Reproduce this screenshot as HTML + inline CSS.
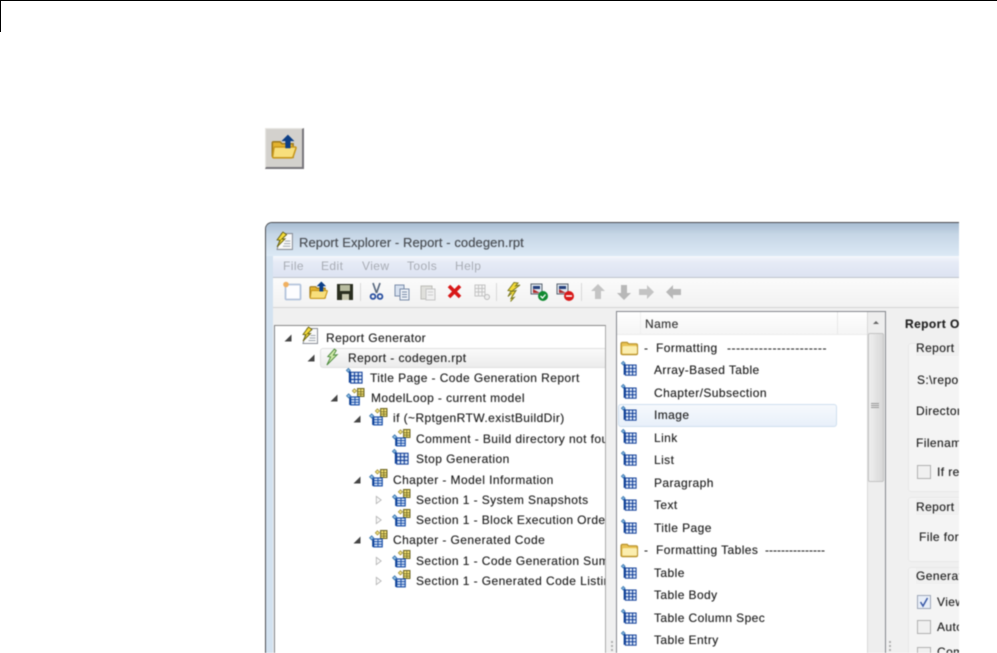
<!DOCTYPE html>
<html><head><meta charset="utf-8"><style>
html,body{margin:0;padding:0;background:#fff;width:997px;height:653px;overflow:hidden}
.a{position:absolute}
.t{position:absolute;font:12px/16px "Liberation Sans",sans-serif;letter-spacing:.42px;color:#1e1e1e;white-space:nowrap;transform:translateY(-8px);text-shadow:0 0 .6px rgba(30,30,30,.55)}
svg.i{position:absolute;overflow:visible}
#w{position:absolute;left:0;top:0;width:997px;height:653px;overflow:hidden;filter:blur(.5px)}
</style></head><body>
<svg width="0" height="0" style="position:absolute"><defs>
<symbol id="grid" viewBox="0 0 18 18" overflow="visible">
<path d="M2.500 0.300l2.200 2.200-2.200 2.200-2.200-2.200z" fill="#7fb0dc" stroke="#2f6ea8" stroke-width=".7"/>
<rect x="3" y="3.500" width="2.200" height="12" fill="#0c3f96"/>
<rect x="5" y="4.500" width="12" height="11.500" fill="#dce8f8" stroke="#123f98" stroke-width="1.100"/>
<path d="M9 4.500v11.500M13 4.500v11.500M5 8.300h12M5 12.100h12" stroke="#123f98" stroke-width="1.200"/>
</symbol>
<symbol id="loop" viewBox="0 0 18 18" overflow="visible">
<path d="M2.500 5.500l2 2-2 2-2-2z" fill="#8fbce4" stroke="#2f6ea8" stroke-width=".7"/>
<path d="M8 .7l2 2-2 2-2-2z" fill="#f0df80" stroke="#9a8a30" stroke-width=".7"/>
<rect x="11" y="0.500" width="6" height="7.500" fill="#f3e173" stroke="#6b6420" stroke-width="1"/>
<path d="M14 1v7M11 3.500h6M11 5.800h6" stroke="#6b6420" stroke-width=".7"/>
<rect x="4.500" y="8.500" width="8" height="7.500" fill="#d8e6f8" stroke="#1a4fa8" stroke-width="1.100"/>
<path d="M8.500 8v8M4 11h9M4 13.500h9" stroke="#1a4fa8" stroke-width=".9"/>
<rect x="3" y="9" width="1.600" height="7" fill="#0c3f96"/>
</symbol>
<symbol id="folder" viewBox="0 0 20 16" overflow="visible">
<path d="M1 13V3q0-1.500 1.500-1.500h5l1.500 1.500h8q1.500 0 1.500 1.500V13q0 1.500-1.500 1.500H2.500Q1 14.500 1 13z" fill="#e9c253" stroke="#b8922c" stroke-width="1.300"/>
<path d="M2.500 7q0-1.500 1.500-1.500h12.500q1.500 0 1.500 1.500v5.500q0 1-1 1H3.500q-1 0-1-1z" fill="#fbeeb0"/>
</symbol>
<symbol id="open" viewBox="0 0 20 20" overflow="visible">
<path d="M1 17V7q0-1 1-1h5l1.500 1.500H17V18H2z" fill="#e4b32e" stroke="#a07c20" stroke-width="1.200"/>
<path d="M3 10h15.500q1 0 .7 1L17 17.500q-.3.800-1.300.8H2q-1 0-.7-1L2.200 11q.2-1 .8-1z" fill="#f8df7c" stroke="#c8981c" stroke-width="1.200"/>
<path d="M13 .5l5 5h-3V11h-4V5.500H8z" fill="#0d3f86"/>
</symbol>
<symbol id="bolt" viewBox="0 0 16 20" overflow="visible">
<path d="M8 1L2 9l3 .5L2 15l5-4.500L5.500 10 14 3.500 9.500 4.500 12 1.500z" fill="#f5dc3a" stroke="#7d7a20" stroke-width="1"/>
<path d="M6 10l4-1-5 8 3-1-3.500 4" fill="#f5dc3a" stroke="#7d7a20" stroke-width="1"/>
</symbol>
<symbol id="rpt" viewBox="0 0 18 18" overflow="visible">
<path d="M6 1.500h10.500V16.500H2L6 1.500z" fill="#fafafa" stroke="#8a8f98" stroke-width="1"/>
<path d="M9.500 8.500h5M8.500 11h6M7.500 13.500h7" stroke="#a0a8b0" stroke-width="1"/>
<path d="M7.500 0L2 7.500l3 .3L2 14l7.500-7.500-3 .2L11 2.500z" fill="#f5dc3a" stroke="#6b6410" stroke-width=".9"/>
</symbol>
<symbol id="arrowD" viewBox="0 0 8 8" overflow="visible"><path d="M7.500 .5v7H.5z" fill="#444"/></symbol>
<symbol id="arrowR" viewBox="0 0 8 10" overflow="visible"><path d="M1.500 .8L7 5 1.500 9.200z" fill="#fafafa" stroke="#b4b4b4"/></symbol>
<symbol id="chk" viewBox="0 0 18 18" overflow="visible">
<rect x="1" y="1" width="11" height="10" fill="#dfe6ee" stroke="#5a6470"/>
<path d="M3 3h7v3H3z" fill="#24407c"/><path d="M3 6l7 4H3z" fill="#b03030"/>
</symbol>
</defs></svg>
<div class="a" style="left:0;top:0;width:997px;height:1px;background:#000"></div>
<div class="a" style="left:0;top:0;width:1px;height:32px;background:#000"></div>
<div id="w">
<!-- standalone button -->
<div class="a" style="left:265px;top:128px;width:39px;height:41px;box-sizing:border-box;background:#d3d1cd;border-right:2px solid #77757a;border-bottom:2px solid #77757a;border-top:1px solid #e8e6e2;border-left:1px solid #e8e6e2"></div>
<svg class="i" style="left:271px;top:134px" width="26" height="26"><use href="#open" width="26" height="26"/></svg>
<!-- window -->
<div class="a" style="left:265px;top:222px;width:694px;height:440px;box-sizing:border-box;border:1px solid #4a4c50;border-right:0;border-radius:7px 0 0 0;background:#d3e2f0;overflow:hidden">
 <div class="a" style="left:0;top:0;width:700px;height:33px;background:linear-gradient(#a8bdd2,#c6d6e6 35%,#dce9f5)"></div>
 <div class="a" style="left:7px;top:33px;width:700px;height:21px;background:linear-gradient(#f5f8fc,#e6ebf6 30%,#dde3f2);border-bottom:1px solid #bfc4cc"></div>
 <div class="a" style="left:7px;top:55px;width:700px;height:29px;background:linear-gradient(#fbfbfb,#f2f2f2);border-bottom:1px solid #d4d4d4"></div>
 <div class="a" style="left:7px;top:85px;width:700px;height:360px;background:#f0f0f0"></div>
</div>
<svg class="i" style="left:275px;top:232px" width="19" height="19"><use href="#rpt" width="19" height="19"/></svg>
<div class="t" style="left:299px;top:243px;color:#4a4e54;font-size:13px;letter-spacing:.08px">Report Explorer - Report - codegen.rpt</div>
<div class="t" style="left:283px;top:266px;color:#a8acb4;text-shadow:none">File</div>
<div class="t" style="left:321px;top:266px;color:#a8acb4;text-shadow:none">Edit</div>
<div class="t" style="left:362px;top:266px;color:#a8acb4;text-shadow:none">View</div>
<div class="t" style="left:407px;top:266px;color:#a8acb4;text-shadow:none">Tools</div>
<div class="t" style="left:455px;top:266px;color:#a8acb4;text-shadow:none">Help</div>
<!-- toolbar -->
<svg class="i" style="left:280px;top:280px" width="400" height="24" viewBox="0 0 400 24">
 <rect x="5.500" y="4.500" width="15" height="15" rx="1" fill="#fdfdff" stroke="#b4c4dc" stroke-width="1.800"/><circle cx="6" cy="4.500" r="2.800" fill="#f0b060"/>
 <use href="#open" x="29" y="1" width="19" height="19"/>
 <rect x="57" y="4" width="16" height="16" fill="#2a2e20"/><rect x="60" y="5" width="10" height="6" fill="#b8bca0"/><rect x="62" y="14" width="7" height="6" fill="#c8c8b0"/>
 <path d="M80.500 3v18" stroke="#d8d8d8"/>
 <path d="M93 3l3.500 10M100 3l-3.500 10" stroke="#5a6a80" stroke-width="1.700"/><circle cx="93" cy="16.500" r="2.400" fill="none" stroke="#2a50a0" stroke-width="1.800"/><circle cx="100" cy="16.500" r="2.400" fill="none" stroke="#2a50a0" stroke-width="1.800"/>
 <rect x="115" y="5" width="9" height="11" fill="#d8e2f0" stroke="#7a8ca8"/><rect x="120" y="9" width="9" height="11" fill="#eef2f8" stroke="#7a8ca8"/><path d="M122 12h5M122 14.500h5M122 17h5" stroke="#7a8ca8"/>
 <rect x="141" y="6" width="11" height="13" fill="#e0e0dc" stroke="#bdbdb8"/><rect x="146" y="9" width="9" height="11" fill="#f0f0f0" stroke="#c4c4c4"/><path d="M148 12h5M148 15h5" stroke="#ccc"/>
 <path d="M169 6l11 11M180 6l-11 11" stroke="#d81818" stroke-width="3.600"/>
 <rect x="195" y="5" width="10" height="11" fill="#f4f4f4" stroke="#c4c4c4"/><path d="M198.500 5v11M202 5v11M195 8.500h10M195 12h10" stroke="#c4c4c4"/><circle cx="207" cy="17" r="2.500" fill="#eee" stroke="#bbb"/>
 <path d="M216.500 3v18" stroke="#d8d8d8"/>
 <use href="#bolt" x="226" y="1" width="16" height="21"/>
 <use href="#chk" x="250" y="3" width="18" height="18"/><circle cx="263" cy="16" r="5" fill="#108a30"/><path d="M260.500 16l2 2 3-3.500" stroke="#fff" stroke-width="1.300" fill="none"/>
 <use href="#chk" x="276" y="3" width="18" height="18"/><circle cx="289" cy="16" r="5" fill="#d81818"/><path d="M286 16h6" stroke="#fff" stroke-width="1.600"/>
 <path d="M301.500 3v18" stroke="#d8d8d8"/>
 <path d="M318 4l7 7h-4v8h-6v-8h-4z" fill="#c4c4c4"/>
 <path d="M344 20l-7-7h4V5h6v8h4z" fill="#b8b8b8"/>
 <path d="M374 12l-7 7v-4h-8V9h8V5z" fill="#c4c4c4"/>
 <path d="M386 12l7-7v4h8v6h-8v4z" fill="#b8b8b8"/>
</svg>
<!-- tree panel -->
<div class="a" style="left:274px;top:325px;width:332px;height:340px;box-sizing:border-box;background:#fff;border:1px solid #7f8288;border-right-color:#aaa;border-top-color:#8a8a8a"></div>
<div class="a" style="left:320px;top:348px;width:285px;height:20px;background:linear-gradient(#fafafa,#ececec);border:1px solid #e0e0e0;border-right:0;border-radius:3px 0 0 3px;box-sizing:border-box"></div>
<svg class="i" style="left:284px;top:334px" width="8" height="8"><use href="#arrowD" width="8" height="8"/></svg>
<svg class="i" style="left:307px;top:354px" width="8" height="8"><use href="#arrowD" width="8" height="8"/></svg>
<svg class="i" style="left:330px;top:394px" width="8" height="8"><use href="#arrowD" width="8" height="8"/></svg>
<svg class="i" style="left:353px;top:415px" width="8" height="8"><use href="#arrowD" width="8" height="8"/></svg>
<svg class="i" style="left:353px;top:476px" width="8" height="8"><use href="#arrowD" width="8" height="8"/></svg>
<svg class="i" style="left:353px;top:536px" width="8" height="8"><use href="#arrowD" width="8" height="8"/></svg>
<svg class="i" style="left:375px;top:495px" width="7" height="10"><use href="#arrowR" width="7" height="10"/></svg>
<svg class="i" style="left:375px;top:515px" width="7" height="10"><use href="#arrowR" width="7" height="10"/></svg>
<svg class="i" style="left:375px;top:556px" width="7" height="10"><use href="#arrowR" width="7" height="10"/></svg>
<svg class="i" style="left:375px;top:576px" width="7" height="10"><use href="#arrowR" width="7" height="10"/></svg>
<svg class="i" style="left:301px;top:327px" width="18" height="18"><use href="#rpt" width="18" height="18"/></svg>
<svg class="i" style="left:325px;top:348px" width="15" height="19" viewBox="0 0 16 20"><path d="M10 1L3 9l3 .5L2 18l11-11-4 .5 3-5z" fill="#cfe8a8" stroke="#4c8a3c" stroke-width="1"/></svg>
<svg class="i" style="left:346px;top:368px" width="17" height="17"><use href="#grid" width="17" height="17"/></svg>
<svg class="i" style="left:346px;top:388px" width="19" height="19"><use href="#loop" width="19" height="19"/></svg>
<svg class="i" style="left:369px;top:408px" width="19" height="19"><use href="#loop" width="19" height="19"/></svg>
<svg class="i" style="left:392px;top:429px" width="19" height="19"><use href="#loop" width="19" height="19"/></svg>
<svg class="i" style="left:392px;top:449px" width="17" height="17"><use href="#grid" width="17" height="17"/></svg>
<svg class="i" style="left:369px;top:469px" width="19" height="19"><use href="#loop" width="19" height="19"/></svg>
<svg class="i" style="left:392px;top:489px" width="19" height="19"><use href="#loop" width="19" height="19"/></svg>
<svg class="i" style="left:392px;top:509px" width="19" height="19"><use href="#loop" width="19" height="19"/></svg>
<svg class="i" style="left:369px;top:530px" width="19" height="19"><use href="#loop" width="19" height="19"/></svg>
<svg class="i" style="left:392px;top:550px" width="19" height="19"><use href="#loop" width="19" height="19"/></svg>
<svg class="i" style="left:392px;top:570px" width="19" height="19"><use href="#loop" width="19" height="19"/></svg>
<div class="a" style="left:275px;top:326px;width:330px;height:300px;overflow:hidden">
<div class="t" style="left:51px;top:12px">Report Generator</div>
<div class="t" style="left:73px;top:32px">Report - codegen.rpt</div>
<div class="t" style="left:95px;top:52px">Title Page - Code Generation Report</div>
<div class="t" style="left:96px;top:72px">ModelLoop - current model</div>
<div class="t" style="left:118px;top:92px">if (~RptgenRTW.existBuildDir)</div>
<div class="t" style="left:141px;top:113px">Comment - Build directory not found</div>
<div class="t" style="left:141px;top:133px">Stop Generation</div>
<div class="t" style="left:118px;top:154px">Chapter - Model Information</div>
<div class="t" style="left:141px;top:174px">Section 1 - System Snapshots</div>
<div class="t" style="left:141px;top:194px">Section 1 - Block Execution Order</div>
<div class="t" style="left:118px;top:214px">Chapter - Generated Code</div>
<div class="t" style="left:141px;top:235px">Section 1 - Code Generation Summary</div>
<div class="t" style="left:141px;top:255px">Section 1 - Generated Code Listing</div>
</div>
<!-- list panel -->
<div class="a" style="left:616px;top:311px;width:270px;height:350px;box-sizing:border-box;background:#fff;border:1px solid #83868c"></div>
<div class="a" style="left:617px;top:312px;width:250px;height:22px;background:linear-gradient(#fff,#f5f5f5);border-bottom:1px solid #ececec"></div>
<div class="a" style="left:640px;top:312px;width:1px;height:22px;background:#f0f0f0"></div>
<div class="a" style="left:837px;top:312px;width:1px;height:22px;background:#e8e8e8"></div>
<div class="t" style="left:645px;top:324px;color:#333">Name</div>
<div class="a" style="left:867px;top:312px;width:18px;height:345px;background:#eeeeee;border-left:1px solid #d8d8d8;box-sizing:border-box"></div>
<svg class="i" style="left:872px;top:319px" width="8" height="5"><path d="M1 5l3-3 3 3z" fill="#666"/></svg>
<div class="a" style="left:868px;top:333px;width:16px;height:149px;box-sizing:border-box;background:linear-gradient(90deg,#efefef,#d8d8d8);border:1px solid #c4c4c4;border-radius:2px"></div>
<div class="a" style="left:871px;top:403px;width:8px;height:1px;background:#999;box-shadow:0 2px #999,0 4px #999"></div>
<div class="a" style="left:618px;top:404px;width:219px;height:23px;box-sizing:border-box;background:linear-gradient(#f6f9fd,#e8f0fa);border:1px solid #cfdfef;border-radius:3px"></div>
<svg class="i" style="left:620px;top:341px" width="19" height="15"><use href="#folder" width="19" height="15"/></svg>
<svg class="i" style="left:620px;top:543px" width="19" height="15"><use href="#folder" width="19" height="15"/></svg>
<svg class="i" style="left:621px;top:361px" width="16" height="16"><use href="#grid" width="16" height="16"/></svg>
<svg class="i" style="left:621px;top:384px" width="16" height="16"><use href="#grid" width="16" height="16"/></svg>
<svg class="i" style="left:621px;top:406px" width="16" height="16"><use href="#grid" width="16" height="16"/></svg>
<svg class="i" style="left:621px;top:429px" width="16" height="16"><use href="#grid" width="16" height="16"/></svg>
<svg class="i" style="left:621px;top:451px" width="16" height="16"><use href="#grid" width="16" height="16"/></svg>
<svg class="i" style="left:621px;top:474px" width="16" height="16"><use href="#grid" width="16" height="16"/></svg>
<svg class="i" style="left:621px;top:496px" width="16" height="16"><use href="#grid" width="16" height="16"/></svg>
<svg class="i" style="left:621px;top:519px" width="16" height="16"><use href="#grid" width="16" height="16"/></svg>
<svg class="i" style="left:621px;top:564px" width="16" height="16"><use href="#grid" width="16" height="16"/></svg>
<svg class="i" style="left:621px;top:586px" width="16" height="16"><use href="#grid" width="16" height="16"/></svg>
<svg class="i" style="left:621px;top:609px" width="16" height="16"><use href="#grid" width="16" height="16"/></svg>
<svg class="i" style="left:621px;top:631px" width="16" height="16"><use href="#grid" width="16" height="16"/></svg>
<div class="t" style="left:644px;top:348px">-</div>
<div class="t" style="left:656px;top:348px">Formatting</div>
<div class="t" style="left:727px;top:348px;letter-spacing:.55px">----------------------</div>
<div class="t" style="left:654px;top:370px">Array-Based Table</div>
<div class="t" style="left:654px;top:393px">Chapter/Subsection</div>
<div class="t" style="left:654px;top:415px">Image</div>
<div class="t" style="left:654px;top:438px">Link</div>
<div class="t" style="left:654px;top:460px">List</div>
<div class="t" style="left:654px;top:483px">Paragraph</div>
<div class="t" style="left:654px;top:505px">Text</div>
<div class="t" style="left:654px;top:528px">Title Page</div>
<div class="t" style="left:644px;top:550px">-</div>
<div class="t" style="left:656px;top:550px">Formatting Tables</div>
<div class="t" style="left:765px;top:550px;letter-spacing:0">---------------</div>
<div class="t" style="left:654px;top:573px">Table</div>
<div class="t" style="left:654px;top:595px">Table Body</div>
<div class="t" style="left:654px;top:618px">Table Column Spec</div>
<div class="t" style="left:654px;top:640px">Table Entry</div>
<!-- splitter grips -->
<div class="a" style="left:611px;top:645px;width:2px;height:2px;background:#b0b0b0;box-shadow:0 4px #b0b0b0,0 -4px #b0b0b0"></div>
<div class="a" style="left:889px;top:645px;width:2px;height:2px;background:#b0b0b0;box-shadow:0 4px #b0b0b0,0 -4px #b0b0b0"></div>
<!-- right panel -->
<div class="a" style="left:890px;top:305px;width:69px;height:350px;overflow:hidden">
 <div class="t" style="left:15px;top:19px;font-weight:bold;color:#222">Report Options</div>
 <div class="a" style="left:18px;top:38px;width:80px;height:149px;box-sizing:border-box;background:#f4f4f4;border:1px solid #e8e8e8;border-radius:3px"></div>
 <div class="a" style="left:18px;top:192px;width:80px;height:65px;box-sizing:border-box;background:#f4f4f4;border:1px solid #e8e8e8;border-radius:3px"></div>
 <div class="a" style="left:18px;top:262px;width:80px;height:110px;box-sizing:border-box;background:#f4f4f4;border:1px solid #e8e8e8;border-radius:3px"></div>
 <div class="t" style="left:26px;top:43px;background:#f0f0f0;padding-right:2px">Report Information</div>
 <div class="t" style="left:27px;top:75px">S:\reports</div>
 <div class="t" style="left:26px;top:106px">Directory</div>
 <div class="t" style="left:26px;top:138px">Filename</div>
 <div class="a" style="left:27px;top:160px;width:14px;height:14px;box-sizing:border-box;background:#f0f0f0;border:1px solid #b0b0b0"></div>
 <div class="t" style="left:47px;top:167px">If report</div>
 <div class="t" style="left:26px;top:202px;background:#f0f0f0">Report Format</div>
 <div class="t" style="left:29px;top:232px">File format</div>
 <div class="t" style="left:26px;top:271px;background:#f0f0f0">Generate</div>
 <div class="a" style="left:27px;top:290px;width:14px;height:14px;box-sizing:border-box;background:#e8eef8;border:1px solid #a0a8b8"></div>
 <svg class="i" style="left:29px;top:292px" width="10" height="10"><path d="M1.500 5l2.500 4 4.500-8" fill="none" stroke="#3a5aa8" stroke-width="1.500"/></svg>
 <div class="t" style="left:47px;top:297px">View</div>
 <div class="a" style="left:27px;top:315px;width:14px;height:14px;box-sizing:border-box;background:#f0f0f0;border:1px solid #b0b0b0"></div>
 <div class="t" style="left:47px;top:322px">Auto</div>
 <div class="a" style="left:27px;top:342px;width:14px;height:14px;box-sizing:border-box;background:#f0f0f0;border:1px solid #b0b0b0"></div>
 <div class="t" style="left:47px;top:347px">Com</div>
</div>
</div>
</body></html>
